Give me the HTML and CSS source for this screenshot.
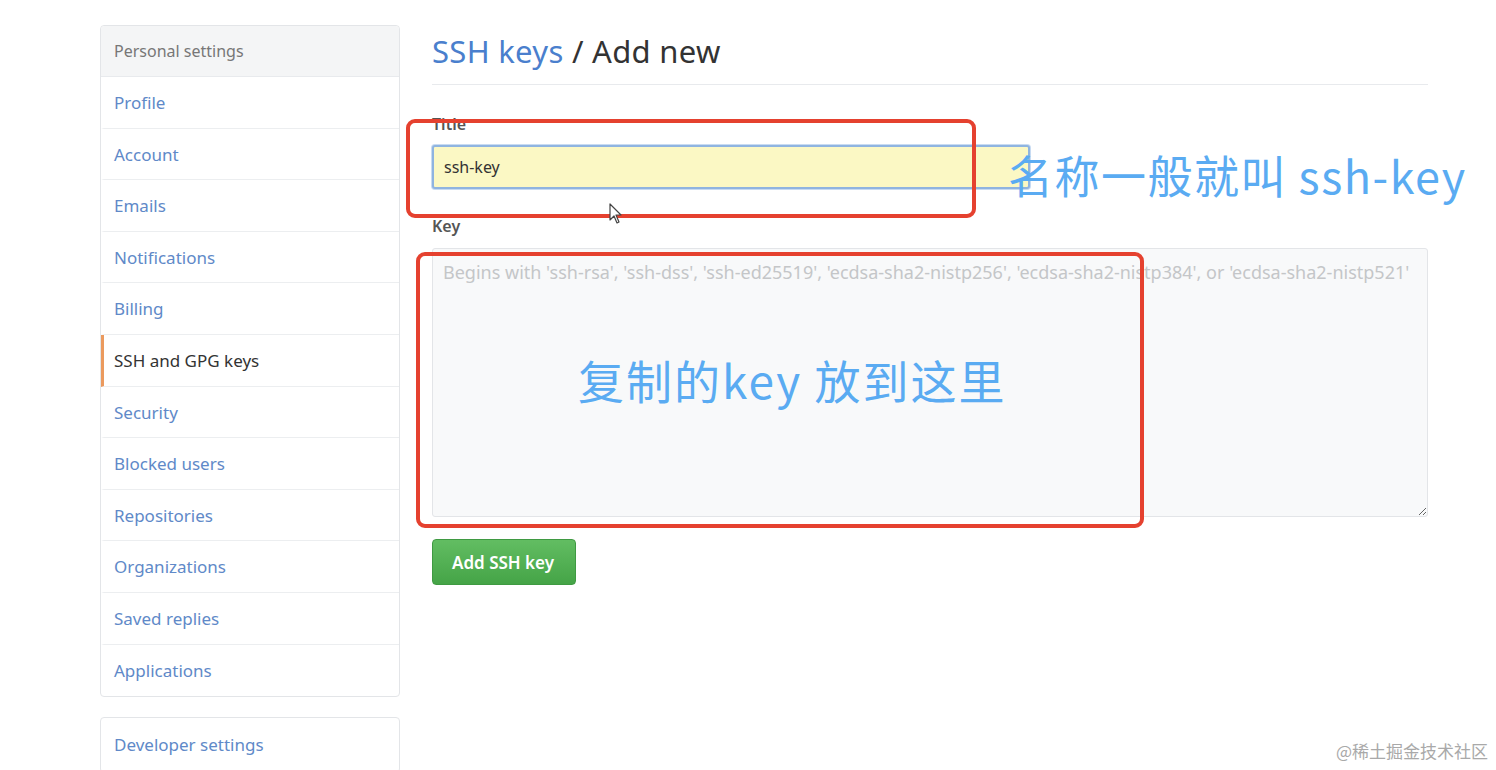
FILE: index.html
```html
<!DOCTYPE html>
<html>

<head>
  <meta charset="utf-8">
  <link rel="stylesheet" href="styles.css">
</head>

<body>

  <div class="page">
    <div class="sidebar">
      <div class="menu">
        <div class="menu-head">Personal settings</div>
        <a class="menu-item" href="#">Profile</a>
        <a class="menu-item" href="#">Account</a>
        <a class="menu-item" href="#">Emails</a>
        <a class="menu-item" href="#">Notifications</a>
        <a class="menu-item" href="#">Billing</a>
        <a class="menu-item selected" href="#">SSH and GPG keys</a>
        <a class="menu-item" href="#">Security</a>
        <a class="menu-item" href="#">Blocked users</a>
        <a class="menu-item" href="#">Repositories</a>
        <a class="menu-item" href="#">Organizations</a>
        <a class="menu-item" href="#">Saved replies</a>
        <a class="menu-item last" href="#">Applications</a>
      </div>
      <div class="menu dev">
        <a class="menu-item last" href="#">Developer settings</a>
      </div>
    </div>

    <div class="main">
      <h2 class="subhead"><a href="#">SSH keys</a> / Add new</h2>

      <form class="key-form">
        <label class="field-label">Title</label>
        <input class="title-input" type="text" value="ssh-key">

        <label class="field-label key-label">Key</label>
        <textarea class="key-input" placeholder="Begins with 'ssh-rsa', 'ssh-dss', 'ssh-ed25519', 'ecdsa-sha2-nistp256', 'ecdsa-sha2-nistp384', or 'ecdsa-sha2-nistp521'"></textarea>

        <button class="btn-primary" type="button">Add SSH key</button>
      </form>
    </div>
  </div>

  <!-- annotations drawn over the screenshot -->
  <div class="mark mark-title"></div>
  <div class="mark mark-key"></div>
  <div class="note note-title">名称一般就叫 ssh-key</div>
  <div class="note note-key">复制的key 放到这里</div>

  <svg class="cursor" width="14" height="22" viewBox="0 0 14 22">
    <path d="M1 1 L1 17 L5 13 L8 20 L10 19 L7 12 L12 12 Z" fill="#fff" stroke="#444" stroke-width="1.2" stroke-linejoin="round"/>
  </svg>

  <div class="watermark">@稀土掘金技术社区</div>

</body>

</html>
```

FILE: styles.css
```css
* {
  box-sizing: border-box;
}

body {
  margin: 0;
  background: #fff;
  font-family: "Noto Sans", "Liberation Sans", sans-serif;
  color: #333;
}

.page {
  display: flex;
  padding: 25px 0 0 100px;
}

/* left menu */
.sidebar {
  width: 300px;
  flex: none;
}

.menu {
  border: 1px solid #e3e5e8;
  border-radius: 4px;
  background: #fff;
}

.menu-head {
  height: 51px;
  padding: 0 14px 0 13px;
  line-height: 51px;
  font-size: 16px;
  color: #777;
  background: #f4f5f6;
  border-bottom: 1px solid #e8eaed;
  border-radius: 4px 4px 0 0;
}

.menu-item {
  display: block;
  height: 51.6px;
  padding: 0 14px 0 10px;
  line-height: 51px;
  font-size: 17px;
  color: #6089c8;
  text-decoration: none;
  border-bottom: 1px solid #eceef0;
  border-left: 3px solid transparent;
}

.menu-item.last {
  border-bottom: none;
}

.menu-item.selected {
  color: #333;
  border-left-color: #eb9a5e;
}

.menu.dev {
  margin-top: 20px;
}

.menu.dev .menu-item {
  height: 54px;
  line-height: 54px;
}

/* main column */
.main {
  width: 996px;
  margin-left: 32px;
}

.subhead {
  margin: 0;
  padding: 6px 0 13px;
  font-size: 31px;
  font-weight: normal;
  line-height: 40px;
  letter-spacing: 0.3px;
  color: #333;
  border-bottom: 1px solid #e8eaed;
}

.subhead a {
  color: #4a7fcd;
  text-decoration: none;
}

.key-form {
  display: flex;
  flex-direction: column;
  align-items: flex-start;
}

.field-label {
  margin-top: 29px;
  font-size: 16px;
  font-weight: 600;
  line-height: 20px;
  color: #555;
}

.key-label {
  margin-top: 27px;
}

.title-input {
  width: 598px;
  height: 44px;
  margin-top: 11px;
  padding: 0 10px;
  font-family: "Noto Sans", "Liberation Sans", sans-serif;
  font-size: 16px;
  color: #333;
  background: #fbf8c4;
  border: 2px solid #8fb4e0;
  border-radius: 3px;
  box-shadow: 0 0 0 1px #c8dbf2;
  outline: none;
}

.key-input {
  width: 996px;
  height: 269px;
  margin-top: 12px;
  padding: 12px 10px;
  font-family: "Noto Sans", "Liberation Sans", sans-serif;
  font-size: 18px;
  line-height: 22px;
  background: #f8f9fa;
  border: 1px solid #e3e5e8;
  border-radius: 3px;
}

.key-input::placeholder {
  color: #c4c6c8;
}

.btn-primary {
  margin-top: 22px;
  height: 46px;
  padding: 0 21px 0 19px;
  font-family: "Noto Sans", "Liberation Sans", sans-serif;
  font-size: 17px;
  font-weight: 600;
  color: #fff;
  background: linear-gradient(#62bd62, #45a447);
  border: 1px solid #3f9a42;
  border-radius: 4px;
}

/* overlays */
.mark {
  position: absolute;
  border: 4px solid #e5412f;
  border-radius: 9px;
}

.mark-title {
  left: 406px;
  top: 119px;
  width: 570px;
  height: 99px;
}

.mark-key {
  left: 416px;
  top: 252px;
  width: 728px;
  height: 276px;
}

.note {
  position: absolute;
  font-family: "Noto Sans CJK SC", sans-serif;
  font-size: 46px;
  line-height: 56px;
  letter-spacing: 2px;
  color: #5aabf2;
  white-space: nowrap;
}

.note-title {
  left: 1008px;
  top: 147px;
  font-size: 45px;
  letter-spacing: 1.5px;
}

.note-key {
  left: 578px;
  top: 351px;
}

.cursor {
  position: absolute;
  left: 609px;
  top: 203px;
}

.watermark {
  position: absolute;
  right: 8px;
  top: 738px;
  font-family: "Noto Sans CJK SC", sans-serif;
  font-size: 17px;
  color: #a9a9a9;
}
```
